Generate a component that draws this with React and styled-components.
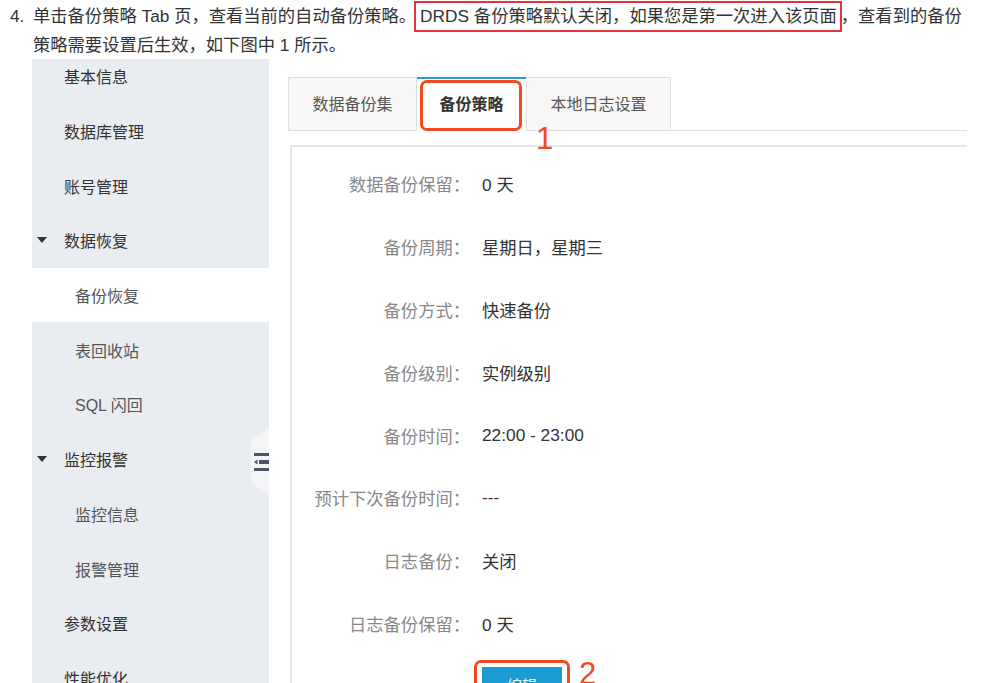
import styled, { createGlobalStyle } from 'styled-components'

const GlobalStyle = createGlobalStyle`
  html, body {
    margin: 0;
    background: #fff;
    font-family: "Liberation Sans", "Noto Sans CJK SC", sans-serif;
    color: #333;
    overflow: hidden;
  }
`

const menu = [
  { text: '基本信息' },
  { text: '数据库管理' },
  { text: '账号管理' },
  { text: '数据恢复', caret: true },
  { text: '备份恢复', sub: true, active: true },
  { text: '表回收站', sub: true },
  { text: 'SQL 闪回', sub: true },
  { text: '监控报警', caret: true },
  { text: '监控信息', sub: true },
  { text: '报警管理', sub: true },
  { text: '参数设置' },
  { text: '性能优化' },
]

const rows = [
  ['数据备份保留：', '0 天'],
  ['备份周期：', '星期日，星期三'],
  ['备份方式：', '快速备份'],
  ['备份级别：', '实例级别'],
  ['备份时间：', '22:00 - 23:00'],
  ['预计下次备份时间：', '---'],
  ['日志备份：', '关闭'],
  ['日志备份保留：', '0 天'],
]

export default function App() {
  return (
    <>
      <GlobalStyle />
      <Intro>
        <Num>4.</Num>
        <IntroText>
          单击备份策略 Tab 页，查看当前的自动备份策略。<Marked>DRDS 备份策略默认关闭，如果您是第一次进入该页面</Marked>，查看到的备份
          <br />
          策略需要设置后生效，如下图中 1 所示。
        </IntroText>
      </Intro>
      <Shot>
        <Sidebar>
          <Menu>
            {menu.map((m) => (
              <MenuItem key={m.text} $sub={m.sub} $active={m.active}>
                {m.caret && <Caret />}
                {m.text}
              </MenuItem>
            ))}
          </Menu>
          <Handle>
            <svg width="15" height="18" viewBox="0 0 15 18">
              <rect x="0" y="0" width="15" height="3" fill="#4b5568" />
              <rect x="5" y="7" width="10" height="4" fill="#4b5568" />
              <path d="M0 9 L3.5 6.5 L3.5 11.5 Z" fill="#4b5568" />
              <rect x="0" y="15" width="15" height="3" fill="#4b5568" />
            </svg>
          </Handle>
        </Sidebar>
        <Main>
          <TabsRow>
            <Tab>数据备份集</Tab>
            <Tab $active>
              备份策略
              <Callout />
              <Mark $left={119} $top={44}>1</Mark>
            </Tab>
            <Tab>本地日志设置</Tab>
            <TabFill />
          </TabsRow>
          <Panel>
            {rows.map(([label, value]) => (
              <Row key={label}>
                <Label>{label}</Label>
                <Value>{value}</Value>
              </Row>
            ))}
            <ButtonRow>
              <EditButton>
                编辑
                <ButtonCallout />
                <Mark $left={97} $top={-9}>2</Mark>
              </EditButton>
            </ButtonRow>
          </Panel>
        </Main>
      </Shot>
    </>
  )
}

const Intro = styled.div`
  display: flex;
  height: 59px;
  padding: 2px 0 0 10px;
  box-sizing: border-box;
  font-size: 17.3px;
  line-height: 29px;
  color: #333;
  white-space: nowrap;
`

const Num = styled.span`
  width: 23px;
  flex-shrink: 0;
`

const IntroText = styled.div`
  position: relative;
  z-index: 2;
`

const Marked = styled.span`
  border: 2px solid #e5323b;
  padding: 3px 3px 4px 4px;
  margin: 0 -1px 0 -2px;
`

const Shot = styled.div`
  display: flex;
  margin-left: 32px;
  height: 624px;
`

const Sidebar = styled.div`
  position: relative;
  width: 237px;
  flex-shrink: 0;
  background: #e9ecf1;
`

const Menu = styled.div`
  height: 100%;
  overflow: hidden;
  & > :first-child {
    margin-top: -10px;
  }
`

const MenuItem = styled.div`
  position: relative;
  height: 54.7px;
  display: flex;
  align-items: center;
  padding-left: ${(p) => (p.$sub ? '43px' : '32px')};
  font-size: 16px;
  color: ${(p) => (p.$sub ? '#555' : '#333')};
  background: ${(p) => (p.$active ? '#fff' : 'transparent')};
`

const Caret = styled.span`
  position: absolute;
  left: 5px;
  top: 50%;
  margin-top: -3px;
  width: 0;
  height: 0;
  border-left: 5.5px solid transparent;
  border-right: 5.5px solid transparent;
  border-top: 6px solid #333;
`

const Handle = styled.div`
  position: absolute;
  left: 219px;
  top: 369px;
  width: 18px;
  height: 68px;
  background: #f4f5f7;
  clip-path: polygon(0 18%, 100% 0, 100% 100%, 0 80%);
  display: flex;
  align-items: center;
  justify-content: flex-end;
`

const Main = styled.div`
  margin-left: 19px;
  width: 679px;
`

const TabsRow = styled.div`
  display: flex;
  margin-top: 18px;
  height: 54px;
`

const Tab = styled.div`
  position: relative;
  box-sizing: border-box;
  width: ${(p) => (p.$active ? '109px' : 'auto')};
  padding: ${(p) => (p.$active ? '0 0 3px' : '0 23px 3px')};
  display: flex;
  align-items: center;
  justify-content: center;
  font-size: 16px;
  font-weight: ${(p) => (p.$active ? 700 : 400)};
  color: ${(p) => (p.$active ? '#333' : '#555')};
  background: ${(p) => (p.$active ? '#fff' : '#f8f7f6')};
  z-index: ${(p) => (p.$active ? 2 : 1)};
  border-top: ${(p) => (p.$active ? '2px solid #1e9fd6' : '1px solid #ddd')};
  border-bottom: ${(p) => (p.$active ? '1px solid transparent' : '1px solid #ddd')};
  border-left: ${(p) => (p.$active ? 'none' : '1px solid #ddd')};
  border-right: ${(p) => (p.$active ? 'none' : '1px solid #ddd')};
  &:first-child {
    width: 129px;
  }
  &:nth-child(3) {
    width: 145px;
    border-left: 1px solid #e5e5e5;
  }
`

const TabFill = styled.div`
  flex: 1;
  border-bottom: 1px solid #ddd;
`

const Callout = styled.div`
  position: absolute;
  left: 3px;
  right: 4px;
  top: 1px;
  bottom: -1px;
  border: 3px solid #f2491f;
  border-radius: 7px;
`

const Mark = styled.span`
  position: absolute;
  z-index: 3;
  left: ${(p) => p.$left}px;
  top: ${(p) => p.$top}px;
  font-size: 31px;
  font-weight: 400;
  line-height: 1;
  color: #f2491f;
  font-family: "Liberation Sans", sans-serif;
`

const Panel = styled.div`
  margin: 14px 0 0 2px;
  padding-top: 5px;
  border-top: 2px solid #e6e6e6;
  border-left: 2px solid #e6e6e6;
  height: 600px;
`

const Row = styled.div`
  display: flex;
  align-items: center;
  height: 62.9px;
  font-size: 17.3px;
`

const Label = styled.div`
  width: 181px;
  margin-left: -3px;
  text-align: right;
  color: #888;
`

const Value = styled.div`
  margin-left: 12px;
  color: #333;
`

const ButtonRow = styled.div`
  padding: 12px 0 0 190px;
`

const EditButton = styled.div`
  position: relative;
  width: 80px;
  height: 34px;
  background: #1a9bd1;
  color: #fff;
  font-size: 15px;
  display: flex;
  align-items: center;
  justify-content: center;
`

const ButtonCallout = styled.div`
  position: absolute;
  left: -8px;
  right: -8px;
  top: -7px;
  bottom: -7px;
  border: 3px solid #f2491f;
  border-radius: 7px;
`
